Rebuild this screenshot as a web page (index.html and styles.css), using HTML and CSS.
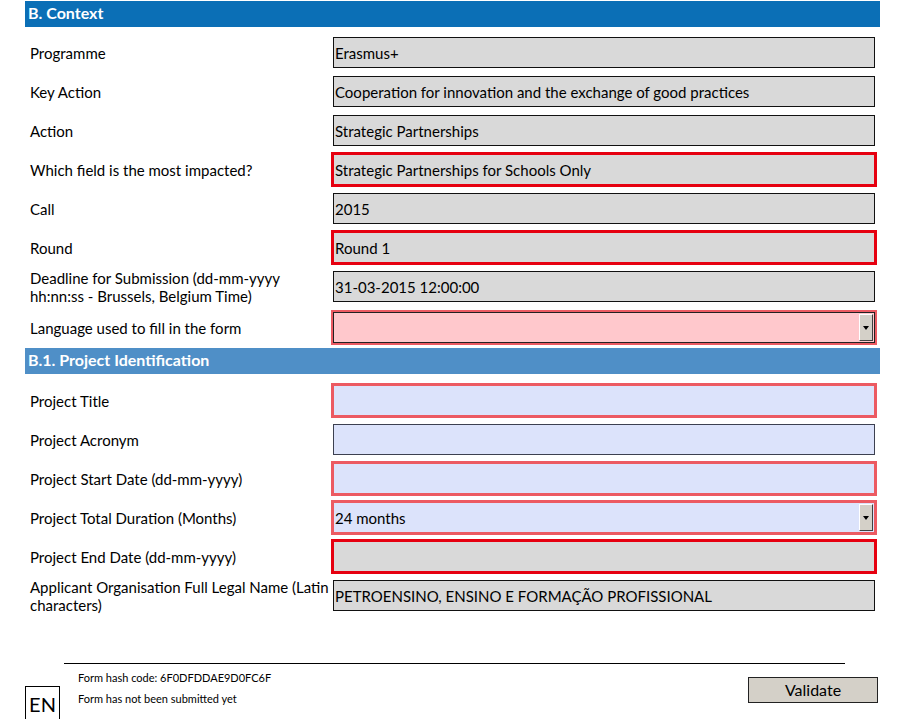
FILE: index.html
```html
<!DOCTYPE html>
<html>
<head>
<meta charset="utf-8">
<link rel="stylesheet" href="styles.css">
</head>
<body>
<div class="page">
  <div class="section-head dark">B. Context</div>
  <div class="rows first">
    <div class="row"><div class="label">Programme</div><div class="field gray">Erasmus+</div></div>
    <div class="row"><div class="label">Key Action</div><div class="field gray">Cooperation for innovation and the exchange of good practices</div></div>
    <div class="row"><div class="label">Action</div><div class="field gray">Strategic Partnerships</div></div>
    <div class="row"><div class="label">Which field is the most impacted?</div><div class="field gray err">Strategic Partnerships for Schools Only</div></div>
    <div class="row"><div class="label">Call</div><div class="field gray">2015</div></div>
    <div class="row"><div class="label">Round</div><div class="field gray err">Round 1</div></div>
    <div class="row tall"><div class="label">Deadline for Submission (dd-mm-yyyy<br>hh:nn:ss - Brussels, Belgium Time)</div><div class="field gray">31-03-2015 12:00:00</div></div>
    <div class="row"><div class="label">Language used to fill in the form</div><div class="field pink soft select"><span></span><span class="drop"><span class="tri"></span></span></div></div>
  </div>
  <div class="section-head light">B.1. Project Identification</div>
  <div class="rows second">
    <div class="row"><div class="label">Project Title</div><div class="field lav softfull"></div></div>
    <div class="row"><div class="label">Project Acronym</div><div class="field lav plain"></div></div>
    <div class="row"><div class="label">Project Start Date (dd-mm-yyyy)</div><div class="field lav softfull"></div></div>
    <div class="row"><div class="label">Project Total Duration (Months)</div><div class="field lav softfull select"><span>24 months</span><span class="drop"><span class="tri"></span></span></div></div>
    <div class="row"><div class="label">Project End Date (dd-mm-yyyy)</div><div class="field gray err"></div></div>
    <div class="row"><div class="label">Applicant Organisation Full Legal Name (Latin<br>characters)</div><div class="field gray">PETROENSINO, ENSINO E FORMAÇÃO PROFISSIONAL</div></div>
  </div>
  <div class="footer-line"></div>
  <div class="footer">
    <div class="lang">EN</div>
    <div class="meta">
      <div>Form hash code: 6F0DFDDAE9D0FC6F</div>
      <div>Form has not been submitted yet</div>
    </div>
    <button class="validate">Validate</button>
  </div>
</div>
</body>
</html>
```
FILE: styles.css
```css
html, body {
  margin: 0;
  padding: 0;
  background: #ffffff;
}
body {
  font-family: Lato, "Open Sans", sans-serif;
  color: #000;
  overflow: hidden;
}
.page {
  width: 904px;
  padding-top: 1px;
}
.section-head {
  margin-left: 25px;
  width: 855px;
  height: 26px;
  box-sizing: border-box;
  padding-left: 3px;
  color: #fff;
  font-weight: 700;
  font-size: 16px;
  line-height: 23px;
}
.section-head.dark { background: #0b6fb6; }
.section-head.light { background: #4f8fc7; }
.rows.first { padding-top: 10px; }
.rows.second { padding-top: 11px; }
.row {
  display: grid;
  grid-template-columns: 303px 542px;
  grid-template-rows: 31px;
  height: 31px;
  margin-left: 30px;
  margin-bottom: 8px;
  align-items: center;
}
.row.tall { margin-bottom: 10px; }
.rows .row:last-child { margin-bottom: 5px; }
.label {
  font-size: 15px;
  line-height: 18px;
  white-space: nowrap;
}
.field {
  height: 31px;
  box-sizing: border-box;
  border: 1px solid #111;
  padding-left: 1px;
  font-size: 15px;
  line-height: 31px;
  white-space: nowrap;
  overflow: hidden;
}
.gray { background: #d9d9d9; }
.pink { background: #ffc8cc; }
.lav { background: #dce3fb; }
.plain { border-color: #3c4050; }
.err { border-color: #e60010; outline: 2px solid #e60010; }
.soft { border-color: #222; outline: 2px solid #ec5a62; }
.softfull { border-color: #ec5a62; outline: 2px solid #ec5a62; }
.select {
  display: flex;
  justify-content: space-between;
  align-items: stretch;
}
.drop {
  width: 12px;
  margin: 1px 1px 1px 0;
  background: #d4d0c8;
  border-left: 1px solid #fff;
  border-top: 1px solid #fff;
  border-right: 1px solid #404040;
  border-bottom: 1px solid #404040;
  display: flex;
  align-items: center;
  justify-content: center;
}
.tri {
  width: 0;
  height: 0;
  border-left: 3px solid transparent;
  border-right: 3px solid transparent;
  border-top: 4px solid #000;
}
.footer-line {
  margin-left: 64px;
  width: 781px;
  border-top: 1px solid #000;
  margin-top: 52px;
}
.footer {
  display: flex;
  align-items: flex-start;
  padding-left: 25px;
  width: 853px;
}
.lang {
  width: 35px;
  height: 40px;
  box-sizing: border-box;
  border: 1px solid #000;
  border-bottom: none;
  margin-top: 22px;
  font-size: 20px;
  line-height: 34px;
  text-align: center;
}
.meta {
  margin-left: 18px;
  margin-top: 3px;
  font-size: 11px;
  line-height: 21px;
}
.validate {
  margin-left: auto;
  margin-top: 13px;
  width: 130px;
  height: 26px;
  background: #d4d0c8;
  border: 1px solid #222;
  font-family: Lato, "Open Sans", sans-serif;
  font-size: 16px;
  line-height: 22px;
  padding: 0;
  color: #000;
}
```
